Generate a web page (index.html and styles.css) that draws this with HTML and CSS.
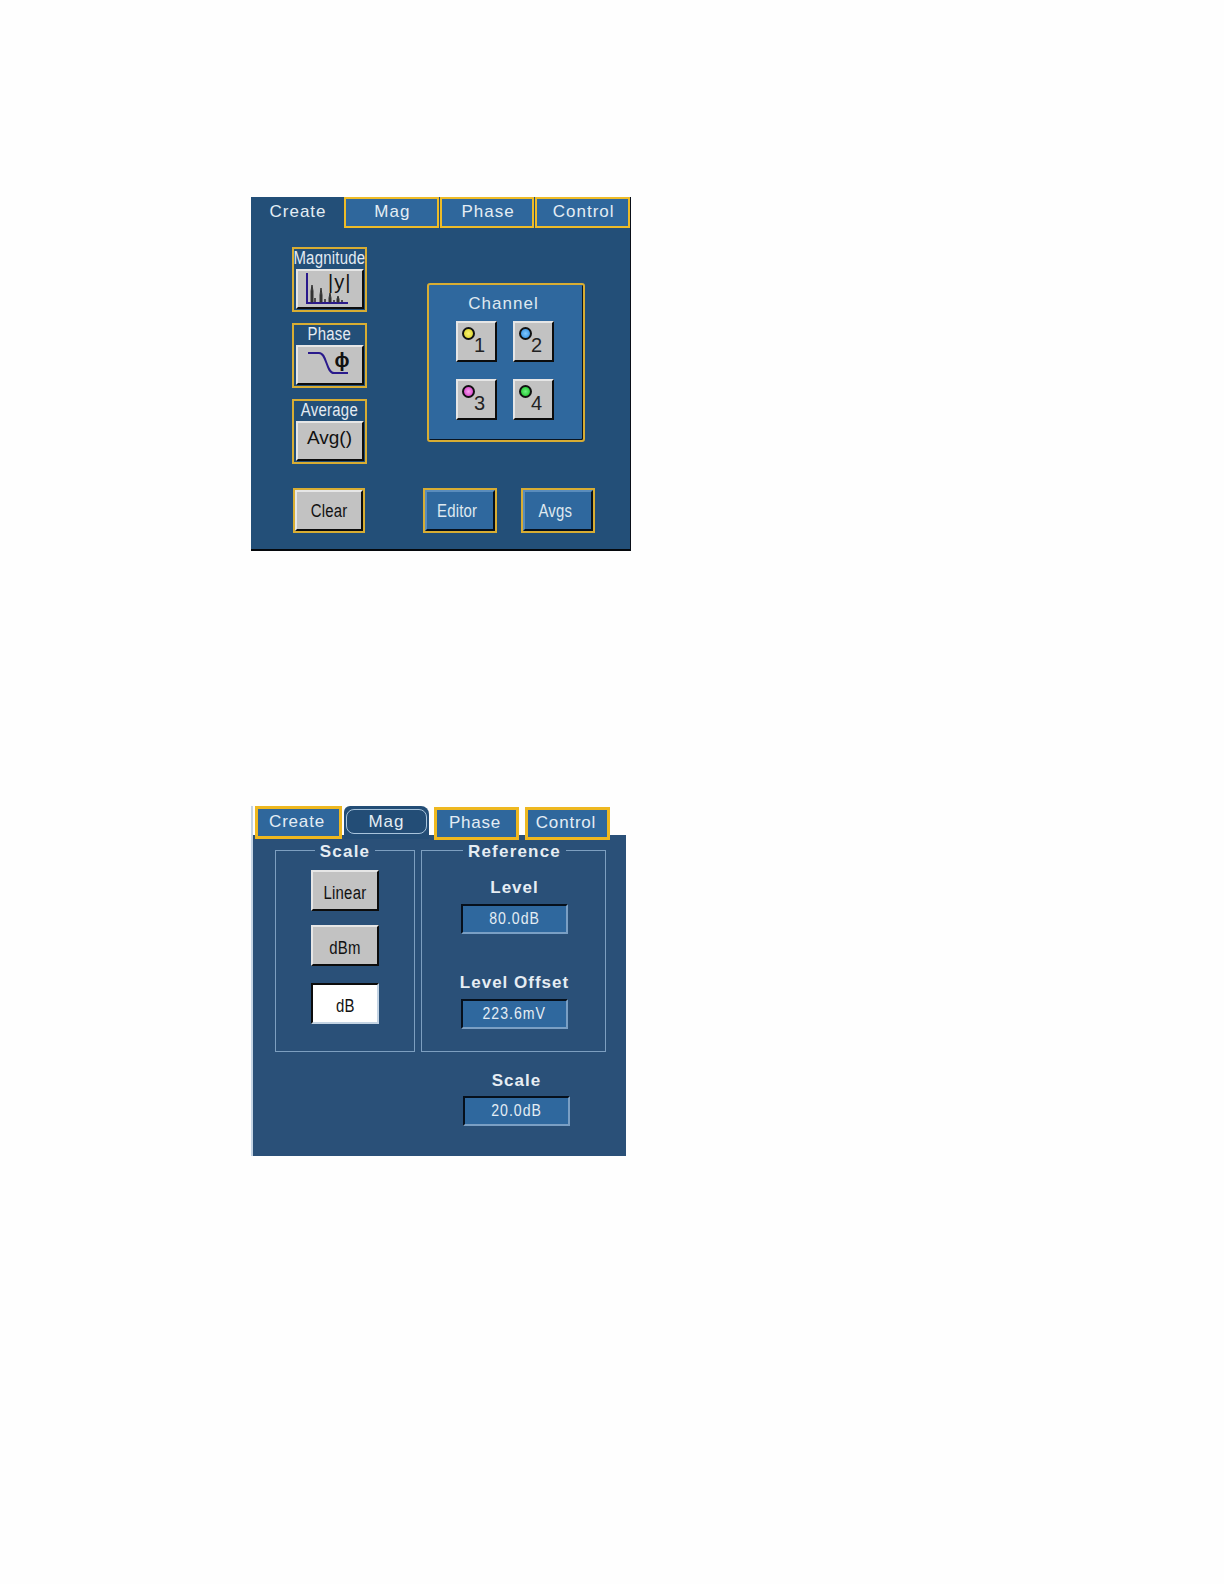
FILE: index.html
```html
<!DOCTYPE html>
<html lang="en">
<head>
<meta charset="utf-8">
<title>Spectral Math Controls</title>
<link rel="stylesheet" href="styles.css">
</head>
<body>
<section class="panel panel-create">
  <div class="tabs">
    <div class="tab tab-active">Create</div>
    <div class="tab">Mag</div>
    <div class="tab">Phase</div>
    <div class="tab">Control</div>
  </div>
  <div class="create-body">
    <div class="create-top">
      <div class="func-col">
        <div class="func">
          <div class="func-label"><span class="nar">Magnitude</span></div>
          <button class="btn func-btn">
            <svg class="ico" viewBox="0 0 66 38" width="66" height="38"><path d="M9 2V32H50" fill="none" stroke="#2a1a8c" stroke-width="2"/><path d="M13 31V20L14 14L15 20V31ZM22 31V24L23 17L24 24V31ZM31 31V27L32 22L33 27V31ZM39 31V28L40 25L41 28V31Z" fill="#333" stroke="#333"/><path d="M17 31V27M27 31V28M36 31V29M44 31V29" stroke="#333" stroke-width="1.6"/></svg>
            <span class="abs-y">|y|</span>
          </button>
        </div>
        <div class="func">
          <div class="func-label"><span class="nar">Phase</span></div>
          <button class="btn func-btn">
            <svg class="ico" viewBox="0 0 66 38" width="66" height="38"><path d="M10 6H21C29 6 28 26 36 26H50" fill="none" stroke="#2a1a8c" stroke-width="2"/></svg>
            <span class="phi">ϕ</span>
          </button>
        </div>
        <div class="func">
          <div class="func-label"><span class="nar">Average</span></div>
          <button class="btn func-btn avg">Avg()</button>
        </div>
      </div>
      <div class="channel">
        <div class="channel-title">Channel</div>
        <div class="channel-grid">
          <button class="btn ch"><span class="dot d1"></span><span class="num">1</span></button>
          <button class="btn ch"><span class="dot d2"></span><span class="num">2</span></button>
          <button class="btn ch"><span class="dot d3"></span><span class="num">3</span></button>
          <button class="btn ch"><span class="dot d4"></span><span class="num">4</span></button>
        </div>
      </div>
    </div>
    <div class="create-bottom">
      <div class="outline o-clear"><button class="btn wide"><span class="nar">Clear</span></button></div>
      <div class="outline o-editor"><button class="btn-blue wide"><span class="nar">Editor</span></button></div>
      <div class="outline o-avgs"><button class="btn-blue wide"><span class="nar">Avgs</span></button></div>
    </div>
  </div>
</section>

<section class="panel panel-mag">
  <div class="tabs2">
    <div class="tab t2-create">Create</div>
    <div class="tab2-active"><span>Mag</span></div>
    <div class="tab t2-phase">Phase</div>
    <div class="tab t2-control">Control</div>
  </div>
  <div class="mag-body">
    <div class="mag-groups">
      <fieldset class="group g-scale">
        <legend>Scale</legend>
        <button class="btn scale-btn b-linear"><span class="nar">Linear</span></button>
        <button class="btn scale-btn b-dbm"><span class="nar">dBm</span></button>
        <button class="btn scale-btn b-db"><span class="nar">dB</span></button>
      </fieldset>
      <fieldset class="group g-ref">
        <legend>Reference</legend>
        <div class="field f-level"><div class="field-label">Level</div><div class="readout"><span class="nar">80.0dB</span></div></div>
        <div class="field f-offset"><div class="field-label">Level Offset</div><div class="readout"><span class="nar">223.6mV</span></div></div>
      </fieldset>
    </div>
    <div class="field f-scale"><div class="field-label">Scale</div><div class="readout"><span class="nar">20.0dB</span></div></div>
  </div>
</section>
</body>
</html>
```
FILE: styles.css
```css
* { box-sizing: border-box; }
html, body { margin: 0; padding: 0; }
body { width: 1224px; height: 1584px; background: #fefefe; font-family: "Liberation Sans", Arial, sans-serif; overflow: hidden; }
button { font-family: inherit; padding: 0; margin: 0; }
.nar { display: inline-block; transform: scaleX(0.83); white-space: nowrap; }

.panel { position: relative; }
.panel-create { margin: 197px 0 0 251px; width: 380px; height: 354px; background: #234f78; border-right: 1px solid #0a0f18; border-bottom: 2px solid #05080c; }
.tabs { display: flex; height: 31px; gap: 1px; }
.tab { flex: 1; display: flex; align-items: center; justify-content: center; padding: 0 0 2px 2px; background: #2f679c; color: #e4edf4; font-size: 17px; letter-spacing: 1px; border: 2px solid #eebc28; }
.tab-active { flex: none; width: 92px; background: #234f78; border: 0; }

.create-top { display: flex; height: 260px; }
.func-col { margin: 19px 0 0 41px; width: 75px; display: flex; flex-direction: column; gap: 11px; }
.func { height: 65px; border: 2px solid #d8ad33; display: flex; flex-direction: column; align-items: center; }
.func-label { height: 20px; line-height: 18px; color: #e4ebf2; font-size: 18px; white-space: nowrap; letter-spacing: 0.3px; }
.btn { background: #c2c2c2; border: 0; border-top: 2px solid #e6e6e6; border-left: 2px solid #e6e6e6; border-right: 2px solid #0c0c0c; border-bottom: 2px solid #0c0c0c; color: #111; }
.func-btn { position: relative; width: 68px; height: 40px; flex: none; }
.avg { font-size: 19px; padding-bottom: 6px; }
.ico { position: absolute; left: 0; top: 0; }
.abs-y { position: absolute; right: 10px; top: 0; font-size: 20px; letter-spacing: 1px; color: #111; }
.phi { position: absolute; right: 12px; top: 2px; font-size: 20px; font-weight: bold; color: #111; }

.channel { margin: 55px 0 0 60px; width: 158px; height: 159px; background: #2f689e; border: 2px solid #d8ad33; border-radius: 3px; box-shadow: inset -1px -1px 0 #0a1420; }
.channel-title { text-align: center; margin: 9px 5px 0 0; height: 20px; line-height: 20px; color: #dfe8f0; font-size: 17px; letter-spacing: 1px; }
.channel-grid { display: grid; grid-template-columns: 40px 40px; gap: 17px; margin: 7px 0 0 27px; }
.ch { position: relative; width: 41px; height: 41px; }
.dot { position: absolute; left: 4px; top: 4px; width: 13px; height: 13px; border-radius: 50%; border: 2px solid #111; }
.d1 { background: radial-gradient(circle, #f8f070, #d8d020); }
.d2 { background: radial-gradient(circle, #80c8ff, #2888e0); }
.d3 { background: radial-gradient(circle, #f8a0f0, #d030c0); }
.d4 { background: radial-gradient(circle, #70f080, #10c020); }
.num { position: absolute; left: 16px; top: 10px; font-size: 20px; line-height: 24px; color: #222; }

.create-bottom { height: 45px; display: flex; }
.outline { border: 2px solid #d8ad33; height: 45px; width: 72px; }
.o-clear { margin-left: 42px; }
.o-editor { margin-left: 58px; width: 74px; }
.o-avgs { margin-left: 24px; width: 74px; }
.wide { width: 100%; height: 100%; padding-top: 2px; font-size: 18px; letter-spacing: 0.2px; }
.btn-blue { padding-right: 5px; background: #2f689e; color: #dfe8f0; border: 0; border-top: 2px solid #5a8cbc; border-left: 2px solid #5a8cbc; border-right: 2px solid #06101c; border-bottom: 2px solid #06101c; }

.panel-mag { margin: 255px 0 0 251px; width: 375px; height: 350px; border-left: 2px solid #c4d4e4; }
.tabs2 { display: flex; height: 29px; align-items: flex-start; position: relative; z-index: 1; }
.tabs2 .tab { flex: none; height: 33px; padding: 0 3px 2px 0; border-width: 3px; border-color: #eeb820; width: 85px; letter-spacing: 0.8px; }
.tabs2 .t2-create { width: 87px; margin-left: 2px; }
.tab2-active { width: 85px; height: 33px; margin-left: 2px; background: #234d76; border-radius: 6px 8px 0 0; padding: 3px 2px 5px 2px; }
.tab2-active span { display: flex; align-items: center; justify-content: center; height: 100%; border: 1px solid #a8c4dc; border-radius: 8px; color: #e4edf4; font-size: 17px; letter-spacing: 1px; }
.tabs2 .t2-phase { margin: 1px 0 0 5px; }
.tabs2 .t2-control { margin: 1px 0 0 6px; }

.mag-body { height: 321px; background: #2a5078; }
.mag-groups { display: flex; padding: 4px 0 0 22px; gap: 6px; }
.group { margin: 0; padding: 0; height: 213px; border: 1.5px solid #7d9fc0; }
.group legend { margin: 0 auto; padding: 4px 5px 0; line-height: 18px; color: #e6edf3; font-weight: bold; font-size: 17px; letter-spacing: 1.2px; }
.g-scale { width: 140px; display: flex; flex-direction: column; align-items: center; }
.g-ref { width: 185px; padding-left: 2px; }
.scale-btn { display: block; width: 68px; height: 41px; margin: 0 auto; padding-top: 5px; font-size: 18px; letter-spacing: 0.3px; }
.b-linear { margin-top: 9px; }
.b-dbm { margin-top: 14px; }
.b-db { margin-top: 17px; background: #fff; border-color: #0c0c0c #c4d4e4 #c4d4e4 #0c0c0c; }
.field { display: flex; flex-direction: column; align-items: center; }
.field-label { height: 20px; line-height: 20px; color: #e6edf3; font-weight: bold; font-size: 17px; letter-spacing: 1px; white-space: nowrap; }
.readout { width: 107px; height: 30px; margin-top: 6px; background: #2f689e; color: #e4edf4; font-size: 17px; letter-spacing: 1.2px; display: flex; align-items: center; justify-content: center; border: 2px solid; border-color: #06101c #7a9fc4 #7a9fc4 #06101c; }
.f-level { margin-top: 17px; }
.f-offset { margin-top: 39px; }
.f-scale { margin: 19px 0 0 210px; width: 107px; }
.f-scale .readout { margin-top: 5px; }
```
